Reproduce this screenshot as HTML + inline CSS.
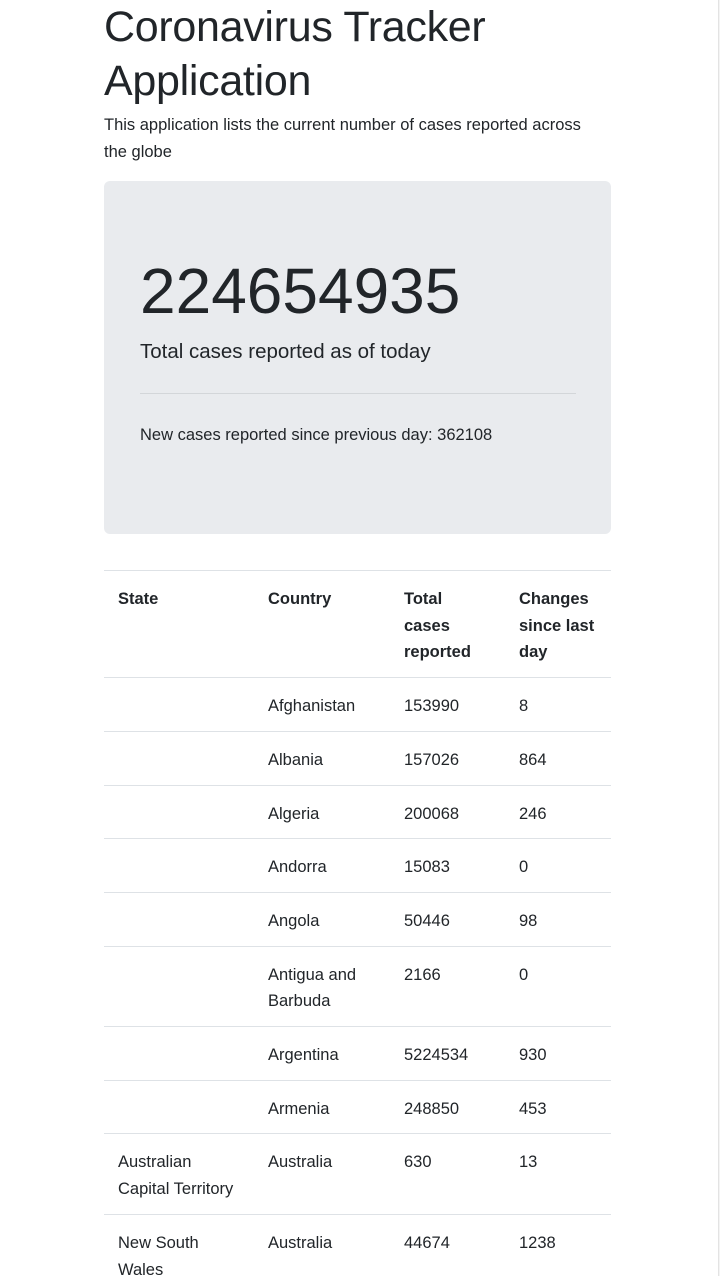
<!DOCTYPE html>
<html><head><style>
html,body{margin:0;width:720px;height:1276px;overflow:hidden}
body{background:#fff;font-family:"Liberation Sans",sans-serif;color:#212529;position:relative}
.sb{position:absolute;left:718px;top:0;width:2px;height:1276px;background:#f4f4f4;border-left:1px solid #e3e3e3}
h1{position:absolute;left:104px;top:0;margin:0;font-size:43px;font-weight:500;line-height:54px;letter-spacing:-0.3px}
p.lead{position:absolute;left:104px;top:112px;margin:0;width:495px;font-size:16.5px;line-height:27px}
.jb{position:absolute;left:104px;top:181px;width:507px;height:353px;background:#e9ebee;border-radius:6px}
.big{position:absolute;left:36px;top:72px;font-size:64px;font-weight:300;line-height:76px}
.sub{position:absolute;left:36px;top:159px;font-size:20.5px;font-weight:300}
.hr{position:absolute;left:36px;top:212px;width:436px;height:1px;background:#d3d6d9}
.nc{position:absolute;left:36px;top:245px;font-size:16.5px}
table{position:absolute;left:104px;top:570px;width:507px;border-collapse:collapse;font-size:16.5px;line-height:26.7px}
td,th{padding:15px 13px 11px 14px;vertical-align:top;text-align:left;border-top:1px solid #dee2e6}
th{font-weight:bold;border-bottom:1px solid #dee2e6}
</style></head><body>
<div class="sb"></div>
<h1>Coronavirus Tracker<br>Application</h1>
<p class="lead">This application lists the current number of cases reported across the globe</p>
<div class="jb">
<div class="big">224654935</div>
<div class="sub">Total cases reported as of today</div>
<div class="hr"></div>
<div class="nc">New cases reported since previous day: 362108</div>
</div>
<table>
<colgroup><col style="width:150px"><col style="width:136px"><col style="width:115px"><col style="width:106px"></colgroup>
<tr><th>State</th><th>Country</th><th>Total cases reported</th><th>Changes since last day</th></tr>
<tr><td></td><td>Afghanistan</td><td>153990</td><td>8</td></tr>
<tr><td></td><td>Albania</td><td>157026</td><td>864</td></tr>
<tr><td></td><td>Algeria</td><td>200068</td><td>246</td></tr>
<tr><td></td><td>Andorra</td><td>15083</td><td>0</td></tr>
<tr><td></td><td>Angola</td><td>50446</td><td>98</td></tr>
<tr><td></td><td>Antigua and Barbuda</td><td>2166</td><td>0</td></tr>
<tr><td></td><td>Argentina</td><td>5224534</td><td>930</td></tr>
<tr><td></td><td>Armenia</td><td>248850</td><td>453</td></tr>
<tr><td>Australian Capital Territory</td><td>Australia</td><td>630</td><td>13</td></tr>
<tr><td>New South Wales</td><td>Australia</td><td>44674</td><td>1238</td></tr>
</table>
</body></html>
